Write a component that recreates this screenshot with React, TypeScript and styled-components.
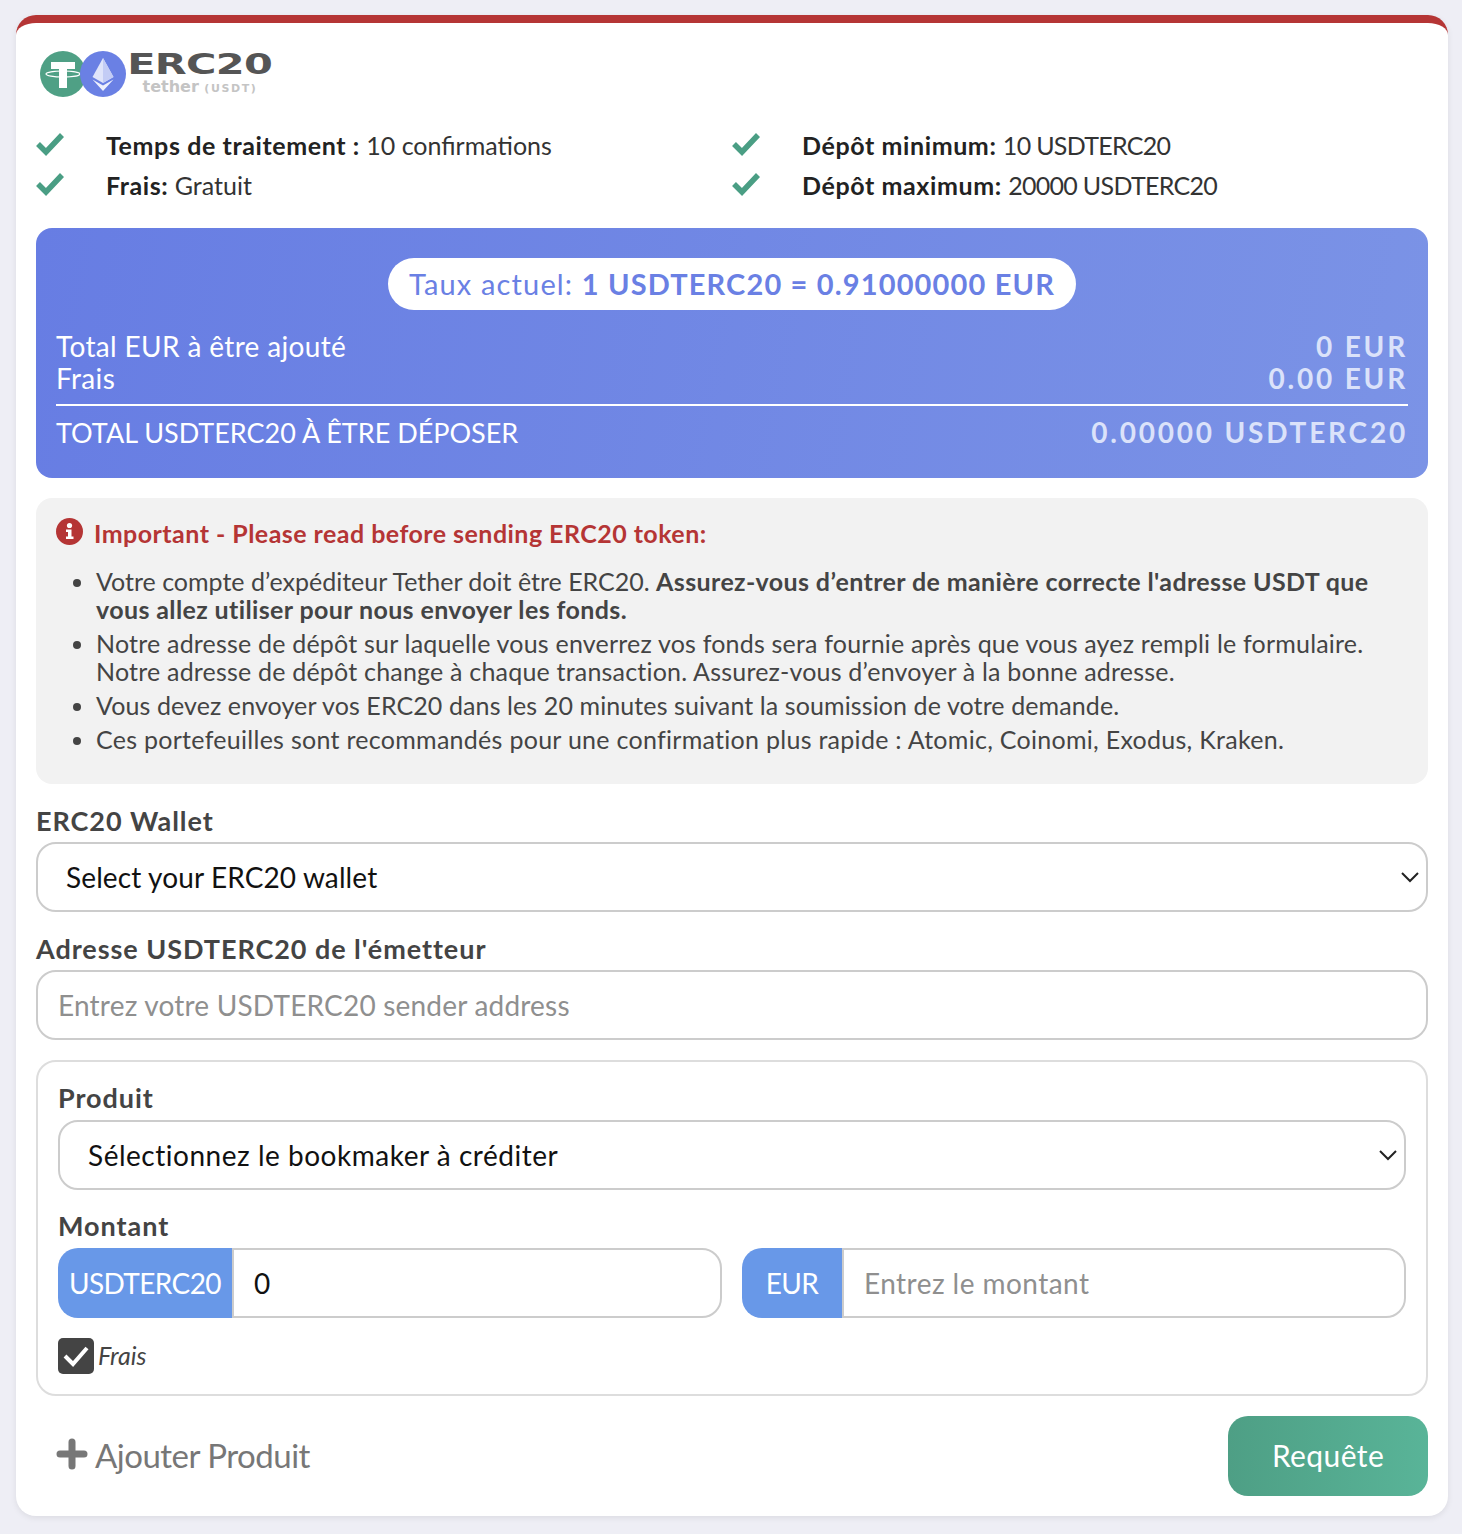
import React from 'react';
import styled, { createGlobalStyle } from 'styled-components';

const GlobalStyle = createGlobalStyle`
  * { box-sizing: border-box; }
  html, body { margin: 0; padding: 0; background: #eeeef5; }
  body { font-family: "Lato", "Open Sans", sans-serif; color: #444; }
`;

const Page = styled.div`
  padding: 15px 14px 18px 16px;
`;

const Card = styled.div`
  background: #fff;
  border-top: 8px solid #b53535;
  border-radius: 20px;
  padding: 20px;
  box-shadow: 0 2px 6px rgba(0, 0, 0, 0.08);
  display: flex;
  flex-direction: column;
`;

const LogoRow = styled.div`
  display: flex;
  align-items: center;
  height: 60px;
  padding-left: 4px;
`;

const Coins = styled.svg`
  width: 90px;
  height: 48px;
  margin-top: 1px;
  flex: none;
`;

const LogoText = styled.div`
  display: flex;
  flex-direction: column;
  align-items: center;
  width: 144px;
  margin-left: -2px;
`;

const LogoMain = styled.span`
  font-family: "DejaVu Sans", sans-serif;
  font-weight: 700;
  font-size: 29px;
  line-height: 28px;
  color: #555;
  letter-spacing: -0.5px;
  transform: scaleX(1.43);
`;

const LogoSub = styled.span`
  font-family: "DejaVu Sans", sans-serif;
  font-size: 16px;
  line-height: 14px;
  color: #c4c4c4;
  font-weight: 700;
  margin-top: 2px;
`;

const LogoSubCaps = styled.span`
  font-size: 11px;
  letter-spacing: 1.6px;
`;

const Facts = styled.div`
  display: grid;
  grid-template-columns: 1fr 1fr;
  margin-top: 26px;
  row-gap: 8px;
`;

const Fact = styled.div`
  display: flex;
  align-items: center;
  height: 32px;
  font-size: 25px;
  color: #333;
`;

const FactIcon = styled.svg`
  width: 30px;
  height: 26px;
  margin-right: 40px;
  margin-top: -4px;
  flex: none;
`;

const Strong = styled.b`
  font-weight: 700;
  color: #222;
  letter-spacing: 0.6px;
`;

const Amount = styled.span`
  letter-spacing: -0.7px;
`;

const RatePanel = styled.div`
  margin-top: 27px;
  height: 250px;
  padding: 30px 20px 0;
  border-radius: 16px;
  background: linear-gradient(100deg, #677de3, #7b93e6);
  color: #fff;
  display: flex;
  flex-direction: column;
`;

const RatePill = styled.div`
  align-self: center;
  height: 52px;
  padding: 0 21px 2px;
  border-radius: 26px;
  background: #fff;
  color: #6a80e4;
  font-size: 29px;
  letter-spacing: 1.15px;
  display: flex;
  align-items: center;
  white-space: pre;
`;

const RateRows = styled.div`
  margin-top: 20px;
  padding-bottom: 10px;
  border-bottom: 2px solid #fff;
`;

const RateRow = styled.div`
  display: flex;
  justify-content: space-between;
  align-items: center;
  height: 32px;
  font-size: 28px;
`;

const RateLabel = styled.span`
  letter-spacing: 0.35px;
`;

const RateTotal = styled(RateRow)`
  margin-top: 10px;
`;

const RateTotalLabel = styled.span`
  font-size: 27px;
`;

const RateValue = styled.span`
  font-weight: 700;
  letter-spacing: 2.8px;
  color: #dbe2fa;
`;

const Notice = styled.div`
  margin-top: 20px;
  height: 286px;
  padding: 19px 20px 20px;
  border-radius: 16px;
  background: #f2f2f2;
`;

const NoticeTitle = styled.div`
  display: flex;
  align-items: center;
  height: 32px;
  color: #b53535;
  font-size: 25px;
  font-weight: 700;
  letter-spacing: 0.46px;
`;

const NoticeIcon = styled.svg`
  width: 27px;
  height: 27px;
  margin-right: 11px;
  margin-top: -4px;
  flex: none;
`;

const NoticeList = styled.ul`
  margin: 18px 0 0;
  padding: 0 0 0 40px;
  font-size: 25px;
  line-height: 28px;
  color: #444;
`;

const NoticeItem = styled.li<{ $tracking: number }>`
  margin-bottom: 6px;
  letter-spacing: ${(p) => p.$tracking}px;
  b { font-weight: 700; letter-spacing: 0.38px; }
`;

const FieldLabel = styled.label`
  display: block;
  height: 32px;
  line-height: 32px;
  font-size: 27px;
  font-weight: 700;
  letter-spacing: 0.95px;
  color: #444;
`;

const TopLabel = styled(FieldLabel)`
  margin-top: 21px;
  margin-bottom: 5px;
`;

const SelectWrap = styled.div`
  position: relative;
`;

const SelectBox = styled.select<{ $tracking: number }>`
  display: block;
  width: 100%;
  height: 70px;
  padding: 0 28px;
  appearance: none;
  background: #fff;
  border: 2px solid #ccc;
  border-radius: 20px;
  font: inherit;
  font-size: 28px;
  letter-spacing: ${(p) => p.$tracking}px;
  color: #111;
`;

const Chevron = styled.svg`
  position: absolute;
  right: 8px;
  top: 28px;
  width: 20px;
  height: 14px;
  pointer-events: none;
`;

const TextInput = styled.input`
  display: block;
  width: 100%;
  height: 70px;
  padding: 0 20px;
  background: #fff;
  border: 2px solid #ccc;
  border-radius: 20px;
  font: inherit;
  font-size: 28px;
  letter-spacing: 0.2px;
  color: #111;
  &::placeholder { color: #8f8f8f; opacity: 1; }
`;

const ProductBox = styled.div`
  margin-top: 20px;
  height: 336px;
  padding: 20px;
  border: 2px solid #ddd;
  border-radius: 20px;
`;

const BoxLabel = styled(FieldLabel)`
  margin-bottom: 6px;
`;

const AmountLabel = styled(FieldLabel)`
  margin-top: 20px;
  margin-bottom: 6px;
`;

const AmountGrid = styled.div`
  display: grid;
  grid-template-columns: 1fr 1fr;
  column-gap: 20px;
`;

const InputGroup = styled.div`
  display: flex;
  height: 70px;
`;

const Addon = styled.span<{ $width: number }>`
  width: ${(p) => p.$width}px;
  flex: none;
  display: flex;
  align-items: center;
  justify-content: center;
  background: #6898e8;
  color: #fff;
  font-size: 28px;
  letter-spacing: -0.6px;
  border-radius: 20px 0 0 20px;
`;

const GroupInput = styled(TextInput)`
  flex: 1;
  min-width: 0;
  letter-spacing: 0.45px;
  border-radius: 0 20px 20px 0;
`;

const CheckRow = styled.div`
  display: flex;
  align-items: center;
  margin-top: 20px;
`;

const CheckBox = styled.span`
  width: 36px;
  height: 36px;
  border-radius: 5px;
  background: #444;
  display: flex;
  align-items: center;
  justify-content: center;
`;

const CheckLabel = styled.i`
  margin-left: 4px;
  margin-top: -2px;
  font-size: 25px;
  color: #444;
`;

const Footer = styled.div`
  display: flex;
  justify-content: space-between;
  align-items: center;
  margin-top: 20px;
`;

const AddProduct = styled.div`
  display: flex;
  align-items: center;
  color: #777;
  font-size: 33px;
  letter-spacing: -0.5px;
  margin-left: 20px;
  padding-bottom: 2px;
`;

const PlusIcon = styled.svg`
  width: 32px;
  height: 32px;
  margin-right: 7px;
  margin-top: -2px;
`;

const SubmitButton = styled.button`
  width: 200px;
  height: 80px;
  padding: 0 0 2px;
  border: 0;
  border-radius: 20px;
  background: linear-gradient(90deg, #4e9f85, #59b498);
  color: #fff;
  font: inherit;
  font-size: 30px;
  letter-spacing: 0.4px;
`;

const Tick = () => (
  <FactIcon viewBox="0 0 30 26">
    <path d="M2 14 L10 22 L26 5" fill="none" stroke="#4a9e84" strokeWidth="5.5" strokeLinejoin="miter" />
  </FactIcon>
);

const Caret = () => (
  <Chevron viewBox="0 0 20 14">
    <path d="M2 3 L10 11 L18 3" fill="none" stroke="#222" strokeWidth="2" />
  </Chevron>
);

const App = () => {
  return (
    <Page>
      <GlobalStyle />
      <Card>
        <LogoRow>
          <Coins viewBox="0 0 90 48">
            <circle cx="23" cy="24" r="23" fill="#4fa085" />
            <path d="M11 12 H35 V19 H27 V38 H19 V19 H11 Z" fill="#fff" />
            <ellipse cx="23" cy="24" rx="17" ry="3" fill="none" stroke="#fff" strokeWidth="1.2" />
            <circle cx="63" cy="24" r="23" fill="#6a80e4" />
            <polygon points="63,8 52.5,27 63,33 73.5,27" fill="#dfe4fa" />
            <polygon points="63,8 63,33 73.5,27" fill="#c3ccf5" />
            <polygon points="52.5,29.5 63,35.5 73.5,29.5 63,41" fill="#eef0fc" />
          </Coins>
          <LogoText>
            <LogoMain>ERC20</LogoMain>
            <LogoSub>tether <LogoSubCaps>(USDT)</LogoSubCaps></LogoSub>
          </LogoText>
        </LogoRow>

        <Facts>
          <Fact><Tick /><span><Strong>Temps de traitement :</Strong> 10 confirmations</span></Fact>
          <Fact><Tick /><span><Strong>Dépôt minimum:</Strong> <Amount>10 USDTERC20</Amount></span></Fact>
          <Fact><Tick /><span><Strong>Frais:</Strong> Gratuit</span></Fact>
          <Fact><Tick /><span><Strong>Dépôt maximum:</Strong> <Amount>20000 USDTERC20</Amount></span></Fact>
        </Facts>

        <RatePanel>
          <RatePill>Taux actuel: <b>1 USDTERC20 = 0.91000000 EUR</b></RatePill>
          <RateRows>
            <RateRow><RateLabel>Total EUR à être ajouté</RateLabel><RateValue>0 EUR</RateValue></RateRow>
            <RateRow><RateLabel>Frais</RateLabel><RateValue>0.00 EUR</RateValue></RateRow>
          </RateRows>
          <RateTotal><RateTotalLabel>TOTAL USDTERC20 À ÊTRE DÉPOSER</RateTotalLabel><RateValue>0.00000 USDTERC20</RateValue></RateTotal>
        </RatePanel>

        <Notice>
          <NoticeTitle>
            <NoticeIcon viewBox="0 0 27 27">
              <circle cx="13.5" cy="13.5" r="13.5" fill="#b53535" />
              <circle cx="13.5" cy="7.5" r="2.6" fill="#fff" />
              <path d="M10 11.5 H15.5 V18.5 H17.5 V21 H10 V18.5 H12 V14 H10 Z" fill="#fff" />
            </NoticeIcon>
            Important - Please read before sending ERC20 token:
          </NoticeTitle>
          <NoticeList>
            <NoticeItem $tracking={0}>Votre compte d’expéditeur Tether doit être ERC20. <b>Assurez-vous d’entrer de manière correcte l'adresse USDT que vous allez utiliser pour nous envoyer les fonds.</b></NoticeItem>
            <NoticeItem $tracking={0.2}>Notre adresse de dépôt sur laquelle vous enverrez vos fonds sera fournie après que vous ayez rempli le formulaire. Notre adresse de dépôt change à chaque transaction. Assurez-vous d’envoyer à la bonne adresse.</NoticeItem>
            <NoticeItem $tracking={0.1}>Vous devez envoyer vos ERC20 dans les 20 minutes suivant la soumission de votre demande.</NoticeItem>
            <NoticeItem $tracking={0.28}>Ces portefeuilles sont recommandés pour une confirmation plus rapide : Atomic, Coinomi, Exodus, Kraken.</NoticeItem>
          </NoticeList>
        </Notice>

        <TopLabel>ERC20 Wallet</TopLabel>
        <SelectWrap>
          <SelectBox $tracking={0.12}><option>Select your ERC20 wallet</option></SelectBox>
          <Caret />
        </SelectWrap>

        <TopLabel>Adresse USDTERC20 de l'émetteur</TopLabel>
        <TextInput placeholder="Entrez votre USDTERC20 sender address" />

        <ProductBox>
          <BoxLabel>Produit</BoxLabel>
          <SelectWrap>
            <SelectBox $tracking={0.52}><option>Sélectionnez le bookmaker à créditer</option></SelectBox>
            <Caret />
          </SelectWrap>
          <AmountLabel>Montant</AmountLabel>
          <AmountGrid>
            <InputGroup>
              <Addon $width={174}>USDTERC20</Addon>
              <GroupInput defaultValue="0" />
            </InputGroup>
            <InputGroup>
              <Addon $width={100}>EUR</Addon>
              <GroupInput placeholder="Entrez le montant" />
            </InputGroup>
          </AmountGrid>
          <CheckRow>
            <CheckBox>
              <svg width="28" height="24" viewBox="0 0 28 24">
                <path d="M3 12 L11 20 L25 4" fill="none" stroke="#fff" strokeWidth="4" />
              </svg>
            </CheckBox>
            <CheckLabel>Frais</CheckLabel>
          </CheckRow>
        </ProductBox>

        <Footer>
          <AddProduct>
            <PlusIcon viewBox="0 0 32 32">
              <path d="M16 4 V28 M4 16 H28" stroke="#777" strokeWidth="7" strokeLinecap="round" />
            </PlusIcon>
            Ajouter Produit
          </AddProduct>
          <SubmitButton>Requête</SubmitButton>
        </Footer>
      </Card>
    </Page>
  );
};

export default App;
